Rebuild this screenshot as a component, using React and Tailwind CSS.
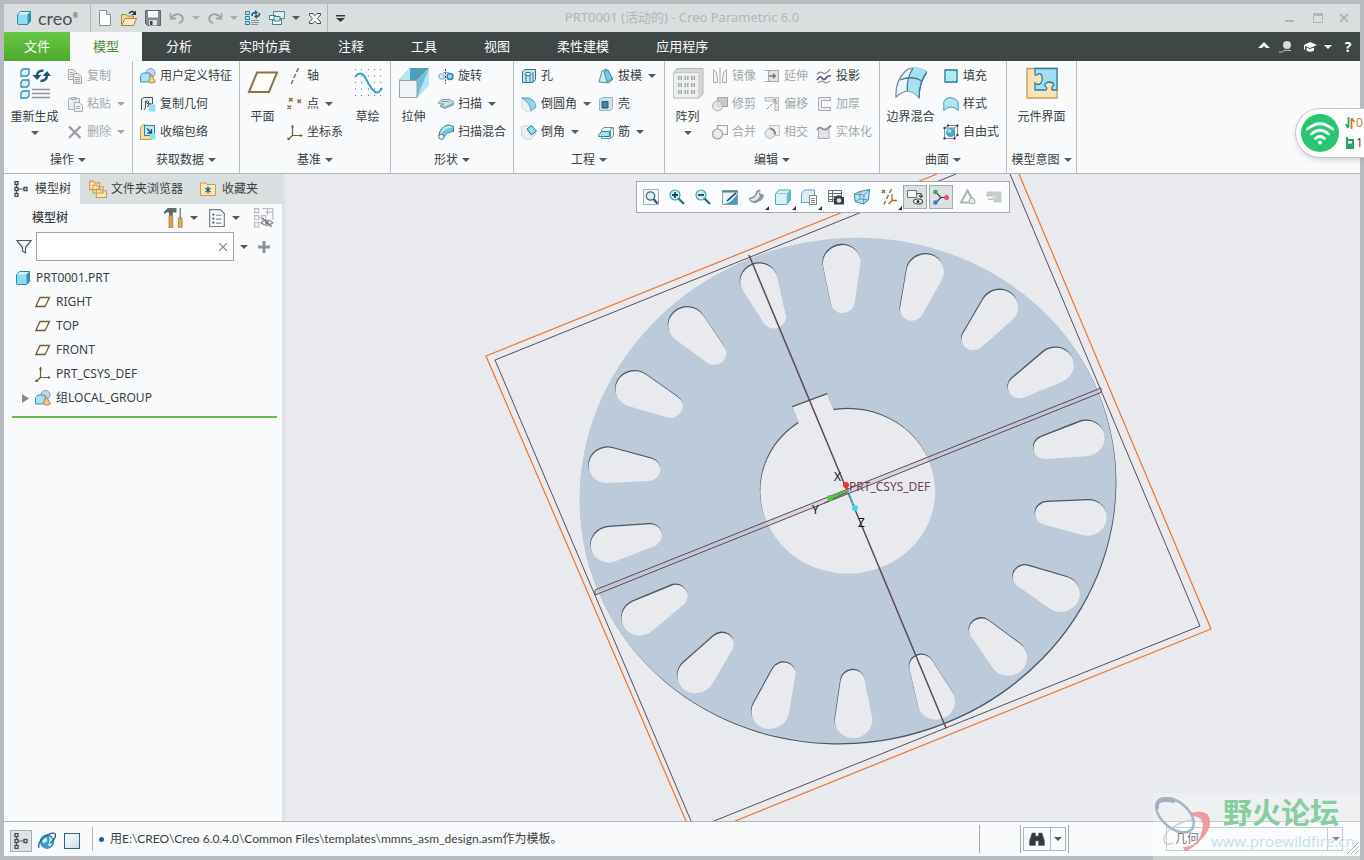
import React from 'react';

const icons16 = {
    cube: (
        <>
            <path d="M1.500 4.500 4.500 1.500H14.500V11.500L11.500 14.500H2.500Q1.500 14.500 1.500 13.500Z" fill="#8fdcf0" stroke="#2f86ab" />
            <path d="M2 4.500 4.700 2H14L11.500 4.500Z" fill="#d5f4fb" />
            <path d="M11.500 4.500 14 2V11.300L11.500 14Z" fill="#2f93bb" />
        </>
    ),
    newFile: (
        <>
            <path d="M2.500.5H9.500L13.500 4.500V15.500H2.500Z" fill="#fff" stroke="#8b9092" />
            <path d="M9.500.5V4.500H13.500" fill="#dfe3e5" stroke="#8b9092" />
        </>
    ),
    open: (
        <>
            <path d="M.5 15.500V4.500H5L6.500 6H12.500V9" fill="#f0d79a" stroke="#a8823e" />
            <path d="M.5 15.500 4 8.500H15.500L12.500 15.500Z" fill="#fbe9bd" stroke="#a8823e" />
            <path d="M8 3.500Q10.500 0 13.500 2.500" fill="none" stroke="#333" strokeWidth="1.500" />
            <path d="M15 .5V5H10.500Z" fill="#333" />
        </>
    ),
    save: (
        <>
            <path d="M.5.5H15.500V15.500H2.500L.5 13.500Z" fill="#83898d" stroke="#5f656a" />
            <path d="M3 1H13V7.500H3Z" fill="#f4f6f7" />
            <path d="M4 10H12V15.500H4Z" fill="#d9dee1" />
            <path d="M5 11H7.500V15H5Z" fill="#3c4246" />
        </>
    ),
    undo: <path d="M1.500 3V8.500H7M2 8Q6 3 10.500 4.500Q15 6.500 13.500 10.500Q12.500 12.500 10 13" fill="none" stroke="#9ea3a6" strokeWidth="1.800" />,
    redo: <path d="M14.500 3V8.500H9M14 8Q10 3 5.500 4.500Q1 6.500 2.500 10.500Q3.500 12.500 6 13" fill="none" stroke="#9ea3a6" strokeWidth="1.800" />,
    regen: (
        <>
            <path d="M.5 1.500H4.500V4.500H.5ZM.5 6.500H4.500V9.500H.5ZM.5 11.500H4.500V14.500H.5Z" fill="#b8ecf7" stroke="#2b7f9d" />
            <path d="M6 10.500H14M6 12.500H14M6 14.500H13" stroke="#8a9093" />
            <path d="M7 6Q7 2.500 10.500 2.500M14.500 3Q14.500 6.500 11.500 6.500" fill="none" stroke="#1f5f7f" strokeWidth="1.600" />
            <path d="M10 0 13 2.500 10 5ZM12 4 9 6.500 12 9Z" fill="#1f5f7f" />
        </>
    ),
    windows: (
        <>
            <path d="M4.500 1.500H15.500V8.500H4.500Z" fill="#e4eef2" stroke="#63808d" />
            <path d="M.5 5.500H6.500V9.500H.5ZM3.500 9.500H12.500V14.500H3.500Z" fill="#fff" stroke="#3f7f99" />
            <path d="M5 6.500H11V11H5Z" fill="#c2e9f4" stroke="#3f7f99" />
        </>
    ),
    closeWin: (
        <path
            d="M2.500 3.500H6L8 5.700 10 3.500H13.500V5L10.500 8.500 13.500 12V13.500H10L8 11.300 6 13.500H2.500V12L5.500 8.500 2.500 5Z"
            fill="#fff"
            stroke="#444a4d"
        />
    ),
    copy: (
        <>
            <path d="M1.500 1.500H6.500L9.500 4.500V11.500H1.500Z" fill="#eceeef" stroke="#a7abad" />
            <path d="M6.500 5.500H11.500L14.500 8.500V15.500H6.500Z" fill="#e3e5e6" stroke="#a7abad" />
            <path d="M8 9.500H13M8 11.500H13M8 13.500H13M3 4.500H6M3 6.500H6M3 8.500H6" stroke="#a7abad" />
        </>
    ),
    paste: (
        <>
            <path d="M1.500 2.500H12.500V13.500H1.500Z" fill="#e8eaeb" stroke="#adb1b3" />
            <path d="M4.500 3.500V1.500H9.500V3.500Z" fill="#d5d8da" stroke="#adb1b3" />
            <path d="M7.500 6.500H12L15.500 9.500V15.500H7.500Z" fill="#f1f2f3" stroke="#a7abad" />
            <path d="M9 10.500H13M9 12.500H13" stroke="#a7abad" />
        </>
    ),
    remove: <path d="M2 2.500 13.500 14M13.500 2.500 2 14" stroke="#9a9ea0" strokeWidth="2.400" />,
    group: (
        <>
            <circle cx="10.500" cy="5" r="4.500" fill="#c9d5ef" stroke="#7f95c4" />
            <path d="M.5 7.500 3 5H10V11.500L7.500 14H.5Z" fill="#a9e2f4" stroke="#3f97bb" />
            <path d="M11.500 6.500 15.500 14Q11.500 16.500 8 14Z" fill="#efc98a" stroke="#a67b37" strokeWidth=".8" />
        </>
    ),
    copyGeom: (
        <>
            <path d="M1.500 14V3L4 1.500H12.500V8H8.500V5H5.500V12L4 14" fill="#eef2f4" stroke="#4c565b" />
            <path d="M6 6 10 10M10 7V10H7" stroke="#233" fill="none" />
            <path d="M9 8.500H15.500V15.500H9Z" fill="#8fe0f2" />
        </>
    ),
    shrink: (
        <>
            <path d="M.5 15.500V3.500L3.500.5H5V11.500H12V15.500Z" fill="#f4dca6" stroke="#c69a4d" />
            <path d="M4.500 1.500H14.500V11.500H4.500Z" fill="#b8ecf7" stroke="#2b87a8" />
            <path d="M7 4.500 11.500 9M11.500 5V9H7.500" stroke="#1b4d64" strokeWidth="1.300" fill="none" />
            <path d="M10 10H15.500V15.500H10Z" fill="#8fe0f2" />
        </>
    ),
    axis: <path d="M11.500 0 9.600 4M8.800 6 6.800 10M6 12 4.200 16" stroke="#7d6a3f" strokeWidth="1.500" />,
    points: (
        <path
            d="M2 2 5.500 5.500M5.500 2 2 5.500M10.500 3.500 14 7M14 3.500 10.500 7M.5 9.500 4 13M4 9.500.5 13"
            stroke="#8a6d3b"
            strokeWidth="1.500"
        />
    ),
    csys: (
        <>
            <path d="M5.500 1V11.500H15M5.500 11.500 1 15.500" fill="none" stroke="#6d5c36" strokeWidth="1.200" />
            <path d="M4 3.500 5.500.5 7 3.500ZM13 10 16 11.500 13 13ZM.5 13V16H3.500Z" fill="#6d5c36" />
        </>
    ),
    revolve: (
        <>
            <circle cx="3.500" cy="8.500" r="2.700" fill="#d4eef6" stroke="#6aa1b5" />
            <circle cx="12" cy="8.500" r="2.900" fill="#9cdcee" stroke="#2b87a8" strokeWidth="1.500" />
            <path d="M5 5Q8 3 11 5" fill="none" stroke="#6aa1b5" />
            <path d="M7.500 1V16" stroke="#445" strokeDasharray="2 1.500" />
        </>
    ),
    sweep: (
        <>
            <path d="M.5 6 4 3.500H11L15.500 5.500V9L7 12.500 2.500 10.500V9L6 8 .5 7.500Z" fill="#cfe0e6" stroke="#6b8d99" strokeWidth=".8" />
            <path d="M2.500 9 7 10.500 15.500 6.500V9L7 12.500 2.500 10.500Z" fill="#7fb3c4" />
            <path d="M4 5.500H10L11.500 6.500" fill="none" stroke="#6b8d99" strokeWidth=".8" />
        </>
    ),
    sweepBlend: (
        <>
            <path d="M.8 12Q2 3 10 1L15.500 2.500V7.500Q8 8 6 13Z" fill="#bfe7f3" stroke="#3a7388" />
            <path d="M4 9Q7 4 15 3.500V7Q8 8 6 12Z" fill="#6fc5dd" />
            <circle cx="3.400" cy="12.700" r="2.600" fill="#f3f8fa" stroke="#3a7388" />
        </>
    ),
    hole: (
        <>
            <path d="M1.500 3.500 4 1.500H14.500V11.500L12 14.500H1.500Z" fill="#c5e9f4" stroke="#3a7388" />
            <ellipse cx="7" cy="6" rx="3" ry="1.700" fill="#fff" stroke="#2b7590" />
            <path d="M5 7V14M9 7V14M12 4V14" stroke="#2b7590" />
        </>
    ),
    round: (
        <>
            <path d="M.5 1.500H7V8L9.500 15.500H5L.5 12Z" fill="#eceff1" stroke="#d3d8da" strokeWidth=".8" />
            <path d="M1 2H6Q14 2.500 15 11L10 15Q10 7.500 1 2Z" fill="#8bd8ec" stroke="#4f92a8" strokeWidth=".8" />
        </>
    ),
    chamfer: (
        <>
            <path d="M.5 2.500 7 1.500 15.500 9 10 15.500H5L.5 12Z" fill="#eceff1" stroke="#c5cacd" strokeWidth=".8" />
            <path d="M6 5 10.500 1.500 15.500 7 10.500 11Z" fill="#8bdcee" stroke="#2b7590" />
        </>
    ),
    draft: (
        <>
            <path d="M1 14 4 3 8 1 15 11 11 15Z" fill="#cfe9f1" stroke="#628a98" />
            <path d="M6 3.500 10 2 14.500 11 9 14Z" fill="#76cbe3" stroke="#2b7590" strokeWidth=".8" />
        </>
    ),
    shell: (
        <>
            <path d="M1.500 3.500 4 1.500H14.500V12L12.500 14.500H1.500Z" fill="#cfe3ea" stroke="#9fb3bb" />
            <path d="M4 5.500H10V12H4Z" fill="#3c86a6" stroke="#29566b" />
        </>
    ),
    rib: (
        <>
            <path d="M3.500 5.500 6 3.500H15.500V11.500L12.500 14.500H3.500Z" fill="#eaf4f7" stroke="#78929c" />
            <path d="M.5 11.500 3.500 7.500H11.500V12.500H.5Z" fill="#a5e4f2" stroke="#2b87a8" />
            <path d="M12.500 5.500V14.500M12.500 5.500 15 3.500" stroke="#78929c" />
        </>
    ),
    mirror: <path d="M1.500 1.500Q6 4 5.500 14.500H1.500ZM14.500 1.500Q10 4 10.500 14.500H14.500ZM8 0V16" fill="#f0f1f2" stroke="#a7abad" />,
    extend: (
        <>
            <path d="M4.500 2.500H14.500V13.500H4.500Z" fill="#e1e3e4" stroke="#a7abad" />
            <path d="M.5 2.500H4.500M.5 13.500H4.500" stroke="#a7abad" />
            <path d="M5 8H10" stroke="#777" strokeWidth="1.500" />
            <path d="M9 5 12.500 8 9 11Z" fill="#777" />
        </>
    ),
    project: (
        <>
            <path d="M1 6Q4 3 7 5T14 1" fill="none" stroke="#888" strokeWidth="1.200" />
            <path d="M1 12Q4 7 6 10T10 10T15 8" fill="none" stroke="#5d4a9c" strokeWidth="1.700" />
            <path d="M2 15Q6 12 8 14T14 13" fill="none" stroke="#999" strokeWidth="1.200" />
        </>
    ),
    trim: (
        <>
            <path d="M5.500 1.500H15.500V10.500H5.500Z" fill="#c9cccd" stroke="#9ea2a4" />
            <circle cx="5.500" cy="10" r="5" fill="#dfe1e2" fillOpacity=".8" stroke="#a9adaf" />
        </>
    ),
    offset: (
        <>
            <path d="M1 1.500H14.500V14.500H11V5H1Z" fill="#e7e9ea" stroke="#b5b9bb" />
            <path d="M3 13 12 4M12 8V3.500H8" fill="none" stroke="#85898b" strokeDasharray="3 1" />
        </>
    ),
    thicken: <path d="M2.500 1.500H14.500V4.500H5.500V11.500H14.500V14.500H2.500Z" fill="#eceeef" stroke="#a7abad" />,
    merge: (
        <>
            <path d="M5.500 1.500H15.500V10.500H5.500Z" fill="#f4f5f6" stroke="#a0a4a6" strokeWidth="1.200" />
            <circle cx="5.500" cy="10" r="5" fill="#e9ebec" stroke="#a0a4a6" strokeWidth="1.200" />
        </>
    ),
    intersect: (
        <>
            <path d="M5.500 1.500H15.500V11.500H5.500Z" fill="#f1f2f3" stroke="#c1c4c6" />
            <circle cx="6" cy="9.500" r="5" fill="#e5e7e8" stroke="#b5b9bb" />
            <path d="M6 4.500Q11 5 11 10.500" fill="none" stroke="#85898b" strokeWidth="2" />
        </>
    ),
    solidify: (
        <>
            <path d="M2.500 5V14.500H13V4" fill="#e2e4e5" stroke="#a7abad" />
            <path d="M1 6Q3 2 6 4.500T12 4L15 1.500" fill="none" stroke="#8f9395" strokeWidth="1.800" />
        </>
    ),
    fill: (
        <>
            <path d="M2 2H14V14H2Z" fill="#bdf0f8" stroke="#24758f" strokeWidth="1.300" />
            <path d="M3 8 8 3M3 12 12 3M5 13 13 5M9 13 13 9" stroke="#8cdcec" />
        </>
    ),
    style: <path d="M.8 5.500Q2 2 7 1.500Q12 2 15.200 5.500V14.500Q12 11 8 11Q4 11 .8 14.500Z" fill="#aee4f2" stroke="#4a9ab5" />,
    freestyle: (
        <>
            <path d="M1.500 4 5 1.500H14.500V11L11.500 14.500H1.500ZM1.500 4H11.500V14.500M11.500 4 14.500 1.500" fill="#f2f6f8" stroke="#7b8a91" />
            <path d="M.5 3H2.500V5H.5ZM.5 13.500H2.500V15.500H.5ZM10.500 13.500H12.500V15.500H10.500ZM13.500.5H15.500V2.500H13.500ZM4 .5H6V2.500H4ZM13.500 10H15.500V12H13.500Z" fill="#333b40" />
            <circle cx="7.500" cy="8.500" r="4.500" fill="#45a5c4" />
            <circle cx="6.500" cy="7" r="2" fill="#a9e0ef" />
        </>
    ),
    tree: (
        <>
            <path d="M3.500 3V14M4 8H12" stroke="#555b5e" />
            <path d="M2 .7H5V3.500H2ZM2 6.500H5V9.500H2ZM2 12.500H5V15.300H2ZM11 6.500H14V9.500H11Z" fill="#fff" stroke="#444a4d" strokeWidth="1.300" />
        </>
    ),
    folders: (
        <>
            <path d="M.5 8.500V1H4L5 2.500H9.500V8.500ZM3.500 11.500V4.500H7L8 6H12.500V11.500ZM6.500 15.500V8H10L11 9.500H15.500V15.500Z" fill="#fae3b4" stroke="#c99d56" />
        </>
    ),
    favorite: (
        <>
            <path d="M.5 14.500V2H6L7 3.500H15.500V14.500Z" fill="#fae6bd" stroke="#c99d56" />
            <path d="M8 5.500V12.500M5.500 7 10.500 11M10.500 7 5.500 11" stroke="#215a6a" strokeWidth="1.100" />
        </>
    ),
    hammer: (
        <>
            <path d="M0 3 3 0H10V3.500H2L0 5ZM4 3.500H7V6H4Z" fill="#62686c" />
            <path d="M4 6H7V16H4Z" fill="#dba24f" stroke="#9a6a25" strokeWidth=".5" />
            <path d="M12.500 0H13.500V8H12.500Z" fill="#6b7175" />
            <path d="M11.500 8H14.500V15.500H11.500Z" fill="#e8aa4d" stroke="#9a6a25" strokeWidth=".5" />
        </>
    ),
    listDoc: (
        <>
            <path d="M1.500.5H11L14.500 4V15.500H1.500Z" fill="#f9fafb" stroke="#777d80" />
            <path d="M4 5H5.500M4 8.500H5.500M4 12H5.500" stroke="#445" strokeWidth="1.600" />
            <path d="M7 5.500H12M7 9H12M7 12.500H12" stroke="#889" />
        </>
    ),
    hideTree: (
        <>
            <path d="M.5.5H4V4H.5ZM.5 6.500H4V10H.5ZM.5 12.500H4V16H.5ZM6.500 6.500H10V10H6.500ZM4 8H6.500M7 .5H16V10M10 3.500H15.500M11.500.5V6" fill="none" stroke="#b9bdbf" />
            <path d="M6 12.500Q11 8 16 12.500Q11 17 6 12.500Z" fill="#f4f5f6" stroke="#888" />
            <circle cx="11" cy="12.500" r="1.500" fill="#777" />
            <path d="M7 8.500 15 16" stroke="#777" strokeWidth="1.200" />
        </>
    ),
    filter: <path d="M.8 1.500H15.200L9.500 8.500V14L6.500 12V8.500Z" fill="#f3f5f6" stroke="#565c5f" strokeWidth="1.200" />,
    plane: <path d="M5 3.500H14.500L10 12.500H.8Z" fill="#fffdf6" stroke="#6f5f3b" strokeWidth="1.300" />,
    zoomFit: (
        <>
            <path d="M.5.5H15.500V15.500H.5Z" fill="#f3f5f6" stroke="#a3adb2" />
            <circle cx="7.500" cy="7" r="4.200" fill="#d5f0f8" stroke="#3f6f86" strokeWidth="1.300" />
            <path d="M10.500 10 14.500 14.500" stroke="#346" strokeWidth="2" />
        </>
    ),
    zoomIn: (
        <>
            <circle cx="6" cy="6" r="5" fill="#c6edf8" stroke="#5a9ab3" strokeWidth="1.200" />
            <path d="M9.500 9.500 15 15" stroke="#2f6b87" strokeWidth="2.300" />
            <path d="M3 6H9M6 3V9" stroke="#174a66" strokeWidth="1.800" />
        </>
    ),
    zoomOut: (
        <>
            <circle cx="6" cy="6" r="5" fill="#c6edf8" stroke="#5a9ab3" strokeWidth="1.200" />
            <path d="M9.500 9.500 15 15" stroke="#2f6b87" strokeWidth="2.300" />
            <path d="M3 6H9" stroke="#174a66" strokeWidth="1.800" />
        </>
    ),
    repaint: (
        <>
            <path d="M.5 1.500H15.500V15.500H.5Z" fill="#e7f5f9" stroke="#7fa3b2" />
            <path d="M15 5V15H2Q10 14 15 5Z" fill="#3f9fc0" />
            <path d="M.5 1.500H15.500V3.500H.5Z" fill="#66808c" />
            <path d="M5 12 14 4" stroke="#234" strokeWidth="1.500" />
        </>
    ),
    shading: (
        <>
            <path d="M1 11Q0 8 4 8Q7 7 7.500 4Q9 0 13 1Q11 3 13 5L16 5.500Q16 10 11 12.500Q5 16.500 1 11Z" fill="#8e9497" />
            <path d="M2 10Q6 10 8.500 6Q10 2.500 12 2Q10 6 12 7Q10 11 6 12Q3 12.500 2 10Z" fill="#e3e6e8" />
        </>
    ),
    displayCube: (
        <>
            <path d="M.5 4.500 4 1H15.500V11L12 15.500H.5Z" fill="#d8f0f7" stroke="#59a7c0" />
            <path d="M12 4.500 15.500 1V11L12 15.500Z" fill="#5ab6d1" />
            <path d="M.5 4.500H12V15.500" fill="none" stroke="#8ccadc" />
        </>
    ),
    viewList: (
        <>
            <path d="M.5 4.500 3.500 1H13.500V10L10 13.500H.5Z" fill="#d8f0f7" stroke="#59a7c0" />
            <path d="M8.500 6.500H15.500V15.500H8.500Z" fill="#fff" stroke="#7e868a" />
            <path d="M10 9.500H14M10 11.500H14M10 13.500H14" stroke="#7e868a" />
        </>
    ),
    camera: (
        <>
            <path d="M.5 1.500H13.500V12.500H.5ZM.5 4.500H13.500M.5 7.500H13.500M.5 10.500H8M4.500 1.500V12.500" fill="#f6f7f8" stroke="#6b7275" />
            <path d="M6 8H8L9 6.500H13L14 8H16V15.500H6Z" fill="#3a3f42" />
            <circle cx="11" cy="11.500" r="2.300" fill="#dfe5e8" />
        </>
    ),
    perspective: (
        <>
            <path d="M.5 5 6 2.500 15.500.5 14.500 11 9.500 15 1 12.500Z" fill="#b9e2f0" stroke="#3f86a2" />
            <path d="M.5 5 10 6 15.500.5M10 6 9.500 15M6 2.500 6 10 1 12.500M6 10 14.500 11" fill="none" stroke="#3f86a2" strokeWidth=".8" />
        </>
    ),
    datums: (
        <>
            <path d="M1 1 4 4M4 1 1 4M10.500 0 8.500 4M7.500 6 5.500 10M4.500 12 3 15.500" stroke="#836d3f" strokeWidth="1.400" />
            <path d="M11 5V11.500H16M11 11.500 7.500 15" fill="none" stroke="#9b6f2b" strokeWidth="1.300" />
        </>
    ),
    annotate: (
        <>
            <path d="M.5 1.500H9.500V8.500H.5Z" fill="#fbfce9" stroke="#6d7477" />
            <path d="M10 4.500H14V8M12 6.500 14 8.500 16 6.500" fill="none" stroke="#444a4d" strokeWidth="1.200" />
            <ellipse cx="11" cy="12.500" rx="4.500" ry="2.500" fill="#fff" stroke="#444a4d" strokeWidth="1.200" />
            <circle cx="11" cy="12.500" r="1.500" fill="#333" />
        </>
    ),
    spin: (
        <>
            <path d="M8 8.500 3 3.500M8 8.500H14M8 8.500 3 13.500" stroke="#444" strokeWidth="1.200" />
            <circle cx="2.500" cy="3" r="2.300" fill="#44a06a" />
            <circle cx="13.500" cy="8.500" r="2.500" fill="#cf5b6b" />
            <circle cx="2.500" cy="13.500" r="2.300" fill="#3b7fbf" />
        </>
    ),
    warn: (
        <>
            <path d="M7.500 1.500 14 13.500H1Z" fill="none" stroke="#b1b5b7" strokeWidth="2.200" />
            <circle cx="12" cy="12" r="3" fill="#e3e5e6" stroke="#a9adaf" />
        </>
    ),
    sectionOff: (
        <>
            <path d="M.5 2.500H15.500V13.500H7.500V10.500Q10 9 8 6.500H.5Z" fill="#c9cccd" />
            <path d="M.5 6.500H6.500Q9 8.500 7 10.500H2" fill="#e8eaeb" stroke="#b5b9bb" />
        </>
    ),
    globe: (
        <>
            <circle cx="8" cy="8.500" r="6.500" fill="#3f9cc7" />
            <path d="M4 5Q7 3 8 6T5 10Q3 8 4 5ZM10 4Q14 6 12.500 10T9 12Q11 8 10 4Z" fill="#c4ecf8" />
            <path d="M1 14Q-1 10 6 4.500T15.500 2Q16.500 5 11 10" fill="none" stroke="#2a5a80" strokeWidth="1.200" />
        </>
    ),
    binoculars: (
        <path d="M3 2H6.500V5H9.500V2H13L15.500 10V14.500H9.500V10H6.500V14.500H.5V10Z" fill="#33383b" stroke="#70767a" strokeWidth=".7" />
    ),
};

const icons32 = {
    regenBig: (
        <>
            <path d="M2 4 4 2H10V7L8 9H2ZM2 15 4 13H10V18L8 20H2ZM2 26 4 24H10V29L8 31H2Z" fill="#d6f3fa" stroke="#2f8fb0" strokeWidth="1.300" />
            <path d="M13 22.500H31M13 26.500H31M13 30.500H31" stroke="#8f9598" strokeWidth="1.500" />
            <path d="M18 9Q18 3.500 24.500 3.500M28 8Q28 14 21.500 14" fill="none" stroke="#1d5974" strokeWidth="2.600" />
            <path d="M13.500 8H22.500L18 13ZM23.500 9 28 4 32 9Z" fill="#1d5974" />
        </>
    ),
    planeBig: <path d="M10 5.500H30L22 25H2Z" fill="#fdfdf9" stroke="#8c744a" strokeWidth="2" />,
    sketch: (
        <>
            <path d="M3.500 2V30M9.500 2V30M16.500 2V30M22.500 2V30M28.500 2V30" stroke="#6a7174" strokeDasharray="1 5.500" fill="none" />
            <path d="M3 10Q9 2 14 12T23 25Q27 27 30 21" fill="none" stroke="#35a3c9" strokeWidth="2" />
        </>
    ),
    extrude: (
        <>
            <path d="M1 13 12 1H31V18L19 31V13Z" fill="#8fd0e5" />
            <path d="M12 1H31L19 13H1Z" fill="#4f9dbb" />
            <path d="M12 1 1 13H12Z" fill="#b5e6f3" />
            <path d="M19 13 31 1V18L19 31Z" fill="#b5e6f3" />
            <path d="M31 1 19 31V13Z" fill="#6fbfd9" />
            <path d="M1.500 13.500H19V30.500H1.500Z" fill="#f1f4f6" stroke="#9ba1a5" />
        </>
    ),
    pattern: (
        <>
            <path d="M1.500 5.500 5 1.500H31V27L27 31H1.500Z" fill="#d4d6d8" stroke="#b3b6b8" />
            <path d="M1.500 5.500H27V31H1.500Z" fill="#ebedee" stroke="#c3c6c8" />
            <path d="M6 11H10M12.500 11H16.500M19 11H23M6 18H10M12.500 18H16.500M19 18H23M6 25H10M12.500 25H16.500M19 25H23" stroke="#a5a9ab" strokeWidth="4" strokeDasharray="1.500 1" />
        </>
    ),
    boundary: (
        <>
            <path d="M1 30Q0 12 13 2Q24 -1 32 5Q24 15 24 31Q14 18 1 30Z" fill="#edf5f9" stroke="#7c8d96" strokeWidth="1.200" />
            <path d="M18 1Q24 -1 32 5Q24 15 24 31Q19 24 13 24Q12 12 18 1Z" fill="#a5e1f1" />
            <path d="M5 13Q17 8 27 14M18 1Q11 12 12.500 24" fill="none" stroke="#4c7686" strokeWidth="1.300" />
            <path d="M32 5Q24 15 24 31" fill="none" stroke="#3e7e96" strokeWidth="1.500" />
        </>
    ),
    puzzle: (
        <>
            <path d="M1 1.500H31V31H1Z" fill="#fbe3b8" stroke="#cf9850" strokeWidth="1.300" />
            <path
                d="M9 1.500H31V23H26Q25 20 28 18Q27 15 23 15Q18 16 19 19Q22 21 20 23H9V16Q12 19 15 16Q17 13 16 9Q14 5 11 8Q9 9 9 7Z"
                fill="#9fe1f2"
                stroke="#2d7f9c"
                strokeWidth="1.300"
            />
        </>
    ),
};

const Icon = ({ name }) => (
    <svg viewBox="0 0 16 16" className="size-4 shrink-0" aria-hidden="true">
        {icons16[name]}
    </svg>
);

const Caret = ({ className = 'text-[#55595b]' }) => (
    <svg viewBox="0 0 8 4" className={`h-1 w-2 shrink-0 ${className}`} aria-hidden="true">
        <path d="M0 0H8L4 4Z" fill="currentColor" />
    </svg>
);

const SmallButton = ({ icon, label, menu, disabled }) => (
    <button type="button" disabled={disabled} className={`flex h-7 items-center gap-1 whitespace-nowrap px-0.5 ${disabled ? 'text-[#a3a8aa]' : ''}`}>
        <Icon name={icon} />
        <span>{label}</span>
        {menu && (
            <span className="pl-0.5">
                <Caret className={disabled ? 'text-[#a3a8aa]' : 'text-[#55595b]'} />
            </span>
        )}
    </button>
);

const BigButton = ({ icon, label, menu, className }) => (
    <button type="button" className={`flex shrink-0 flex-col items-center pt-1.5 ${className}`}>
        <svg viewBox="0 0 32 32" className="size-8" aria-hidden="true">
            {icons32[icon]}
        </svg>
        <span className="mt-2 whitespace-nowrap leading-5">{label}</span>
        {menu && (
            <span className="mt-1">
                <Caret />
            </span>
        )}
    </button>
);

const Column = ({ className = '', children }) => <div className={`flex flex-col items-start pt-px ${className}`}>{children}</div>;

const Group = ({ title, className, children }) => (
    <section className={`flex shrink-0 flex-col border-r border-[#b9bec1] ${className}`}>
        <div className="flex h-[86px]">{children}</div>
        <button type="button" className="flex h-[26px] items-center justify-center gap-1 whitespace-nowrap">
            {title}
            <Caret />
        </button>
    </section>
);

const QuickButton = ({ icon, label }) => (
    <button type="button" aria-label={label} className="flex w-6 justify-center">
        <Icon name={icon} />
    </button>
);

const QuickMenu = ({ label, className = 'text-[#55595b]' }) => (
    <button type="button" aria-label={label} className="flex w-3.5 justify-center">
        <Caret className={className} />
    </button>
);

const TitleBar = () => (
    <header className="grid h-7 grid-cols-[1fr_auto_1fr] items-center bg-[#d9dfdf]">
        <div className="flex h-7 items-center">
            <div className="flex h-7 w-[87px] items-center border-r border-[#b3b9bb] pl-3">
                <Icon name="cube" />
                <span className="ml-1.5 font-['Lato',sans-serif] text-lg leading-6 text-[#4b5154]">creo</span>
                <span className="mb-1.5 text-[7px] leading-none">®</span>
            </div>
            <div className="flex h-7 items-center border-r border-[#b3b9bb] pl-0.5">
                <QuickButton icon="newFile" label="新建" />
                <QuickButton icon="open" label="打开" />
                <QuickButton icon="save" label="保存" />
                <QuickButton icon="undo" label="撤消" />
                <QuickMenu label="撤消列表" className="text-[#a9aeb0]" />
                <QuickButton icon="redo" label="重做" />
                <QuickMenu label="重做列表" className="text-[#a9aeb0]" />
                <QuickButton icon="regen" label="重新生成" />
                <QuickButton icon="windows" label="窗口" />
                <QuickMenu label="窗口列表" />
                <QuickButton icon="closeWin" label="关闭" />
            </div>
            <button type="button" aria-label="自定义快速访问工具栏" className="flex w-6 justify-center">
                <svg viewBox="0 0 9 7" className="h-[7px] w-[9px]">
                    <path d="M0 0H9V1.500H0ZM0 3H9L4.500 7Z" fill="#33383b" />
                </svg>
            </button>
        </div>
        <h1 className="font-['Noto_Sans','Noto_Sans_CJK_SC',sans-serif] text-[13px] text-[#b1b6b8]">PRT0001 (活动的) - Creo Parametric 6.0</h1>
        <div className="flex justify-end pr-1">
            <button type="button" aria-label="最小化" className="w-7">
                <svg viewBox="0 0 28 16" className="h-4 w-7">
                    <path d="M9 11H18" stroke="#b1b6b8" strokeWidth="2" />
                </svg>
            </button>
            <button type="button" aria-label="最大化" className="w-7">
                <svg viewBox="0 0 28 16" className="h-4 w-7">
                    <path d="M9.500 4V12.500H18.500V4" fill="none" stroke="#b1b6b8" />
                    <path d="M9 4.500H19" stroke="#b1b6b8" strokeWidth="3" />
                </svg>
            </button>
            <button type="button" aria-label="关闭窗口" className="w-6">
                <svg viewBox="0 0 24 16" className="h-4 w-6">
                    <path d="M8 4 16 12M16 4 8 12" stroke="#b1b6b8" strokeWidth="2" />
                </svg>
            </button>
        </div>
    </header>
);

const menuTabs = ['分析', '实时仿真', '注释', '工具', '视图', '柔性建模', '应用程序'];

const MenuBar = () => (
    <nav className="flex h-[29px] items-stretch bg-[#3e4646] text-[13px] text-white">
        <button type="button" className="bg-linear-to-b from-[#66c843] to-[#4ea92c] px-5">
            文件
        </button>
        <button type="button" className="mr-px bg-[#f8fafc] px-[23px] text-[#4d8c2e]">
            模型
        </button>
        <div className="flex gap-px">
            {menuTabs.map((tab) => (
                <button key={tab} type="button" className="whitespace-nowrap px-[23px]">
                    {tab}
                </button>
            ))}
        </div>
        <div className="ml-auto flex items-center gap-2 pr-1">
            <button type="button" aria-label="最小化功能区">
                <svg viewBox="0 0 12 6" className="mb-1 h-1.5 w-3">
                    <path d="M0 6 6 0 12 6H8L6 4 4 6Z" fill="#fff" />
                </svg>
            </button>
            <button type="button" aria-label="搜索">
                <svg viewBox="0 0 16 16" className="size-4">
                    <circle cx="9" cy="6" r="4" fill="#d7dadb" />
                    <path d="M1 13Q4 14 6 11.500Q10 11 13 11.500" fill="none" stroke="#c5c9ca" />
                </svg>
            </button>
            <button type="button" aria-label="学习连接" className="flex items-center gap-1.5">
                <svg viewBox="0 0 16 16" className="size-4">
                    <path d="M8 3 15 6 8 9 3 7V10.500H2V6Z" fill="#fff" />
                    <path d="M4.500 8.500 8 10 12 8.500V11.500Q8 14 4.500 11.500Z" fill="#fff" />
                </svg>
                <Caret className="text-white" />
            </button>
            <button type="button" className="w-4 text-sm font-bold">
                ?
            </button>
        </div>
    </nav>
);

const Ribbon = () => (
    <div className="flex border-b border-[#b0b5b7] bg-[#f8fafc]">
        <Group title="操作" className="w-[129px]">
            <BigButton icon="regenBig" label="重新生成" menu className="w-[61px]" />
            <Column>
                <SmallButton icon="copy" label="复制" disabled />
                <SmallButton icon="paste" label="粘贴" menu disabled />
                <SmallButton icon="remove" label="删除" menu disabled />
            </Column>
        </Group>
        <Group title="获取数据" className="w-[107px]">
            <Column className="pl-[5px]">
                <SmallButton icon="group" label="用户定义特征" />
                <SmallButton icon="copyGeom" label="复制几何" />
                <SmallButton icon="shrink" label="收缩包络" />
            </Column>
        </Group>
        <Group title="基准" className="w-[151px]">
            <BigButton icon="planeBig" label="平面" className="w-[45px]" />
            <Column>
                <SmallButton icon="axis" label="轴" />
                <SmallButton icon="points" label="点" menu />
                <SmallButton icon="csys" label="坐标系" />
            </Column>
            <BigButton icon="sketch" label="草绘" className="w-[45px]" />
        </Group>
        <Group title="形状" className="w-[123px]">
            <BigButton icon="extrude" label="拉伸" className="w-[45px]" />
            <Column>
                <SmallButton icon="revolve" label="旋转" />
                <SmallButton icon="sweep" label="扫描" menu />
                <SmallButton icon="sweepBlend" label="扫描混合" />
            </Column>
        </Group>
        <Group title="工程" className="w-[151px]">
            <Column className="w-[82px] pl-[5px]">
                <SmallButton icon="hole" label="孔" />
                <SmallButton icon="round" label="倒圆角" menu />
                <SmallButton icon="chamfer" label="倒角" menu />
            </Column>
            <Column>
                <SmallButton icon="draft" label="拔模" menu />
                <SmallButton icon="shell" label="壳" />
                <SmallButton icon="rib" label="筋" menu />
            </Column>
        </Group>
        <Group title="编辑" className="w-[215px]">
            <BigButton icon="pattern" label="阵列" menu className="w-[45px]" />
            <Column className="w-[52px]">
                <SmallButton icon="mirror" label="镜像" disabled />
                <SmallButton icon="trim" label="修剪" disabled />
                <SmallButton icon="merge" label="合并" disabled />
            </Column>
            <Column className="w-[52px]">
                <SmallButton icon="extend" label="延伸" disabled />
                <SmallButton icon="offset" label="偏移" disabled />
                <SmallButton icon="intersect" label="相交" disabled />
            </Column>
            <Column>
                <SmallButton icon="project" label="投影" />
                <SmallButton icon="thicken" label="加厚" disabled />
                <SmallButton icon="solidify" label="实体化" disabled />
            </Column>
        </Group>
        <Group title="曲面" className="w-[127px]">
            <BigButton icon="boundary" label="边界混合" className="w-[61px]" />
            <Column>
                <SmallButton icon="fill" label="填充" />
                <SmallButton icon="style" label="样式" />
                <SmallButton icon="freestyle" label="自由式" />
            </Column>
        </Group>
        <Group title="模型意图" className="w-[70px]">
            <BigButton icon="puzzle" label="元件界面" className="w-full" />
        </Group>
    </div>
);

const treeItems = [
    { icon: 'plane', name: 'RIGHT' },
    { icon: 'plane', name: 'TOP' },
    { icon: 'plane', name: 'FRONT' },
    { icon: 'csys', name: 'PRT_CSYS_DEF' },
    { icon: 'group', name: '组LOCAL_GROUP', expandable: true },
];

const ModelTree = () => (
    <aside className="w-[281px] shrink-0 border-r-[3px] border-[#dfe2e4] bg-[#f8fafc]">
        <div className="flex h-[30px] bg-[#d9dfdf]">
            <button type="button" className="flex w-[76px] items-center gap-1.5 bg-[#f8fafc] pl-[9px]">
                <Icon name="tree" />
                模型树
            </button>
            <button type="button" className="flex items-center gap-1 pl-[9px]">
                <svg viewBox="0 0 16 16" className="size-[18px]" aria-hidden="true">
                    {icons16.folders}
                </svg>
                文件夹浏览器
            </button>
            <button type="button" className="flex items-center gap-1.5 pl-[17px]">
                <Icon name="favorite" />
                收藏夹
            </button>
        </div>
        <div className="flex h-7 items-center pl-7 pr-2">
            <h2 className="mr-auto font-medium">模型树</h2>
            <button type="button" aria-label="设置" className="flex items-center gap-1.5 pr-2.5">
                <svg viewBox="0 0 16 16" className="size-5" aria-hidden="true">
                    {icons16.hammer}
                </svg>
                <Caret />
            </button>
            <button type="button" aria-label="显示" className="flex items-center gap-1.5 pr-3.5">
                <svg viewBox="0 0 16 16" className="size-[18px]" aria-hidden="true">
                    {icons16.listDoc}
                </svg>
                <Caret />
            </button>
            <button type="button" aria-label="隐藏">
                <svg viewBox="0 0 17 17" className="size-5" aria-hidden="true">
                    {icons16.hideTree}
                </svg>
            </button>
        </div>
        <div className="flex h-[29px] items-center pl-3">
            <label htmlFor="tree-filter" className="mr-1" aria-label="过滤">
                <Icon name="filter" />
            </label>
            <div className="flex h-[29px] w-[198px] items-center border border-[#a0a5a8] bg-white pr-1">
                <input id="tree-filter" type="text" className="h-full min-w-0 flex-1 px-1 outline-none" />
                <button type="button" aria-label="清除" className="px-0.5">
                    <svg viewBox="0 0 8 8" className="size-2">
                        <path d="M0 0 8 8M8 0 0 8" stroke="#8d9294" strokeWidth="1.300" />
                    </svg>
                </button>
            </div>
            <button type="button" aria-label="过滤选项" className="px-1.5">
                <Caret />
            </button>
            <button type="button" aria-label="添加" className="ml-1">
                <svg viewBox="0 0 12 12" className="size-3">
                    <path d="M6 0V12M0 6H12" stroke="#8d9294" strokeWidth="3" />
                </svg>
            </button>
        </div>
        <ul className="ml-2 mr-[5px] border-b-2 border-[#67be50] pb-1.5 pt-[5px] font-['Noto_Sans','Noto_Sans_CJK_SC',sans-serif]">
            <li className="flex h-6 items-center gap-1 pl-1">
                <svg viewBox="1 0 16 16" className="size-4 shrink-0" aria-hidden="true">
                    {icons16.cube}
                </svg>
                PRT0001.PRT
            </li>
            {treeItems.map((item) => (
                <li key={item.name} className="flex h-6 items-center gap-1 pl-2">
                    <span className="flex w-[11px] justify-center">
                        {item.expandable && (
                            <svg viewBox="0 0 7 9" className="h-[9px] w-[7px]">
                                <path d="M0 0 7 4.500 0 9Z" fill="#85898b" />
                            </svg>
                        )}
                    </span>
                    <Icon name={item.icon} />
                    <span className="pl-px">{item.name}</span>
                </li>
            ))}
        </ul>
    </aside>
);

const viewTools = [
    { icon: 'zoomFit', label: '重新调整' },
    { icon: 'zoomIn', label: '放大' },
    { icon: 'zoomOut', label: '缩小' },
    { icon: 'repaint', label: '重画' },
    { icon: 'shading', label: '渲染选项', menu: true },
    { icon: 'displayCube', label: '显示样式', menu: true },
    { icon: 'viewList', label: '已保存方向', menu: true },
    { icon: 'camera', label: '视图管理器' },
    { icon: 'perspective', label: '透视图' },
    { icon: 'datums', label: '基准显示过滤器', menu: true },
    { icon: 'annotate', label: '注释显示', active: true },
    { icon: 'spin', label: '旋转中心', active: true },
    { icon: 'warn', label: '仿真' },
    { icon: 'sectionOff', label: '截面' },
];

const slotAngles = Array.from({ length: 18 }, (_, i) => i * 20);

const Viewport = () => (
    <main className="relative min-w-0 flex-1 overflow-hidden bg-[#e8eaed]">
        <svg viewBox="285 174 1075 647" preserveAspectRatio="xMidYMid slice" className="absolute inset-0 size-full">
            <defs>
                <g id="slots" transform="matrix(268.500 -15 6.600 252.800 847.200 490.300)">
                    {slotAngles.map((angle) => (
                        <path
                            key={angle}
                            transform={`rotate(${angle})`}
                            d="M-.0444 -.7437L-.0691 -.8937A.07 .07 0 1 1 .0691 -.8937L.0444 -.7437A.045 .045 0 0 1 -.0444 -.7437Z"
                        />
                    ))}
                </g>
                <g id="bore">
                    <ellipse cx="847.300" cy="490" rx="87.500" ry="82.300" />
                    <path d="M792 406 827 393 836 416 802 432Z" />
                </g>
                <circle id="disc" r="1" transform="matrix(268 -15 6.600 252.300 847.600 490.500)" />
            </defs>

            <use href="#disc" x="0.700" y="1.200" fill="#4b5764" />
            <use href="#disc" fill="#bccada" />
            <use href="#slots" fill="#4b5764" />
            <use href="#slots" x="0.500" y="1.300" fill="#e8eaed" />
            <use href="#bore" fill="#4b5764" />
            <use href="#bore" x="0.500" y="1.300" fill="#e8eaed" />

            {/* datum planes */}
            <path d="M1019 174 1211 629 735 821M686 821 486 356 937 174" fill="none" stroke="#ee7330" strokeWidth="1.200" />
            <path d="M1010 174 1200 626 714 821M691 821 495 360 956 174" fill="none" stroke="#604a58" />
            <path d="M595 590 1101 388V392.500L595 595Z" fill="#c9c3d1" fillOpacity=".6" stroke="#604a58" />
            <path d="M749 255 946 728" stroke="#604a58" strokeWidth="1.500" />

            {/* coordinate system */}
            <path d="M848 491 846 485" stroke="#e23b3b" strokeWidth="2" />
            <path d="M848 491 830 498" stroke="#55c244" strokeWidth="3" />
            <path d="M848 492 824 503" stroke="#604a58" />
            <path d="M848 491 855 508" stroke="#3ccfd6" strokeWidth="2" strokeDasharray="2 1" />
            <circle cx="846" cy="485" r="3" fill="#ee3535" />
            <circle cx="830" cy="498" r="3" fill="#4fc840" />
            <circle cx="855" cy="508" r="3" fill="#36e0e6" />
            <g className="font-['Noto_Sans',sans-serif] text-xs">
                <text x="834" y="481" fill="#111">X</text>
                <text x="812" y="514" fill="#111">Y</text>
                <text x="858" y="527" fill="#111">Z</text>
                <text x="849" y="491" fill="#6e4352">PRT_CSYS_DEF</text>
            </g>
        </svg>
        <div className="absolute inset-x-0 top-[7px] flex justify-center">
            <div className="flex h-8 min-w-[374px] items-center justify-between border border-[#a3a8ac] bg-[#fbfcfd] px-0.5">
                {viewTools.map((tool) => (
                    <button
                        key={tool.icon}
                        type="button"
                        aria-label={tool.label}
                        className={`relative flex size-6 items-center justify-center border ${tool.active ? 'border-[#a5aaad] bg-[#dde0e3]' : 'border-transparent'}`}
                    >
                        <Icon name={tool.icon} />
                        {tool.menu && (
                            <svg viewBox="0 0 4 4" className="absolute -bottom-0.5 -right-0.5 size-1">
                                <path d="M4 0V4H0Z" fill="#333" />
                            </svg>
                        )}
                    </button>
                ))}
            </div>
        </div>
    </main>
);

const StatusBar = () => (
    <footer className="flex h-[35px] items-center border-t border-[#b0b5b7] bg-[#f8fafc]">
        <button type="button" aria-label="导航器" className="ml-1.5 mt-1 flex size-[22px] items-center justify-center border border-[#a8adb0] bg-[#dfe2e4]">
            <Icon name="tree" />
        </button>
        <button type="button" aria-label="浏览器" className="ml-1.5 mt-1">
            <svg viewBox="0 0 16 16" className="size-[18px]">
                {icons16.globe}
            </svg>
        </button>
        <button type="button" aria-label="全屏" className="ml-2 mt-1 size-4 border border-[#336280] bg-linear-to-br from-white to-[#cfdae2]" />
        <div className="ml-3 flex h-6 items-center gap-1.5 border-l border-[#b0b5b7] pl-1.5">
            <span className="size-[5px] rounded-full bg-[#24618a]" />
            <p className="whitespace-nowrap font-['Lato','Noto_Sans_CJK_SC',sans-serif]">用E:\CREO\Creo 6.0.4.0\Common Files\templates\mmns_asm_design.asm作为模板。</p>
        </div>
        <div className="ml-auto mr-10 h-7 border-l border-[#a3a8ab]" />
        <div className="flex h-7 items-center border-x border-[#a3a8ab] px-0.5">
            <div className="flex h-6 border border-[#b0b5b7]">
                <button type="button" aria-label="查找" className="flex w-[27px] items-center justify-center border-r border-[#b0b5b7]">
                    <Icon name="binoculars" />
                </button>
                <button type="button" aria-label="查找选项" className="flex w-3.5 items-center justify-center">
                    <Caret />
                </button>
            </div>
        </div>
        <div className="relative ml-[97px] h-6 w-[177px]">
            <select aria-label="选择过滤器" className="h-6 w-full appearance-none border border-[#b0b5b7] pl-2 outline-none">
                <option>几何</option>
            </select>
            <span className="pointer-events-none absolute inset-y-0 right-0 flex w-4 items-center justify-center border-l border-[#b0b5b7]">
                <Caret />
            </span>
        </div>
        <svg viewBox="0 0 12 12" className="ml-1 mr-px mb-0.5 size-3 self-end" aria-hidden="true">
            <path d="M0 12 12 0M4 12 12 4M8 12 12 8" stroke="#8d9396" />
        </svg>
    </footer>
);

const WifiWidget = () => (
    <div className="absolute right-0 top-[108px] flex h-[50px] w-[69px] items-center gap-1.5 rounded-l-full border border-r-0 border-[#c3c7c9] bg-white pl-[5px] shadow-md">
        <svg viewBox="0 0 38 38" className="size-[38px] shrink-0">
            <circle cx="19" cy="19" r="19" fill="#28c76f" />
            <path d="M6.500 15Q19 4.500 31.500 15M10.500 20Q19 12.500 27.500 20M14.500 24.500Q19 20.500 23.500 24.500" fill="none" stroke="#fff" strokeWidth="2.800" strokeLinecap="round" />
            <circle cx="19" cy="28.500" r="2" fill="#fff" />
        </svg>
        <div className="flex flex-col gap-1 leading-4">
            <span className="flex items-center gap-px text-[#c8741c]">
                <svg viewBox="0 0 10 12" className="h-3 w-2.5 shrink-0">
                    <path d="M3.500 0V10M.5 7 3.500 11" fill="none" stroke="#29a566" strokeWidth="1.800" />
                    <path d="M6.500 12V1M6.500 1 9.500 5" fill="none" stroke="#d57b1e" strokeWidth="1.800" />
                </svg>
                0
            </span>
            <span className="flex items-center gap-px">
                <svg viewBox="0 0 10 12" className="h-3 w-2.5 shrink-0">
                    <path d="M1 2H9V12H1ZM1 0H3V2H1Z" fill="#29a566" />
                    <path d="M3 4H7V6.500H3Z" fill="#fff" />
                </svg>
                1
            </span>
        </div>
    </div>
);

const Watermark = () => (
    <div className="pointer-events-none absolute bottom-0 right-1 h-[67px] w-[207px] bg-white/30">
        <svg viewBox="0 0 60 60" className="absolute left-0 top-1 size-[60px]">
            <g fill="none">
                <path d="M38 16Q57 11 57 25T34 54Q31 54 30 50Q45 50 49 34Q53 19 38 19Z" fill="#ee9a9e" />
                <path d="M41 22Q14 28 11 42Q11 50 20 46" stroke="#cbd1d5" strokeWidth="1.500" />
                <ellipse cx="22" cy="18" rx="22" ry="13" transform="rotate(40 22 18)" stroke="#a5b6c5" strokeWidth="2.500" />
                <path d="M4.500 12Q1 0 22 4.500" stroke="#a0b2c2" strokeWidth="3.500" />
            </g>
        </svg>
        <div className="absolute left-[70px] top-0 whitespace-nowrap text-[29px] font-bold leading-10 text-[#86cda1]">野火论坛</div>
        <div className="absolute left-[58px] top-[38px] whitespace-nowrap text-[15px] leading-5 text-[#c3e0dd]">www.proewildfire.cn</div>
    </div>
);

const App = () => {
    return (
        <div className="relative flex min-h-screen flex-col overflow-hidden bg-[#b8bcbe] p-1 font-['Open_Sans','Noto_Sans_CJK_SC',sans-serif] text-xs text-[#3a3f42]">
            <TitleBar />
            <MenuBar />
            <Ribbon />
            <div className="flex flex-1">
                <ModelTree />
                <Viewport />
            </div>
            <StatusBar />
            <WifiWidget />
            <Watermark />
        </div>
    );
};

export default App;
